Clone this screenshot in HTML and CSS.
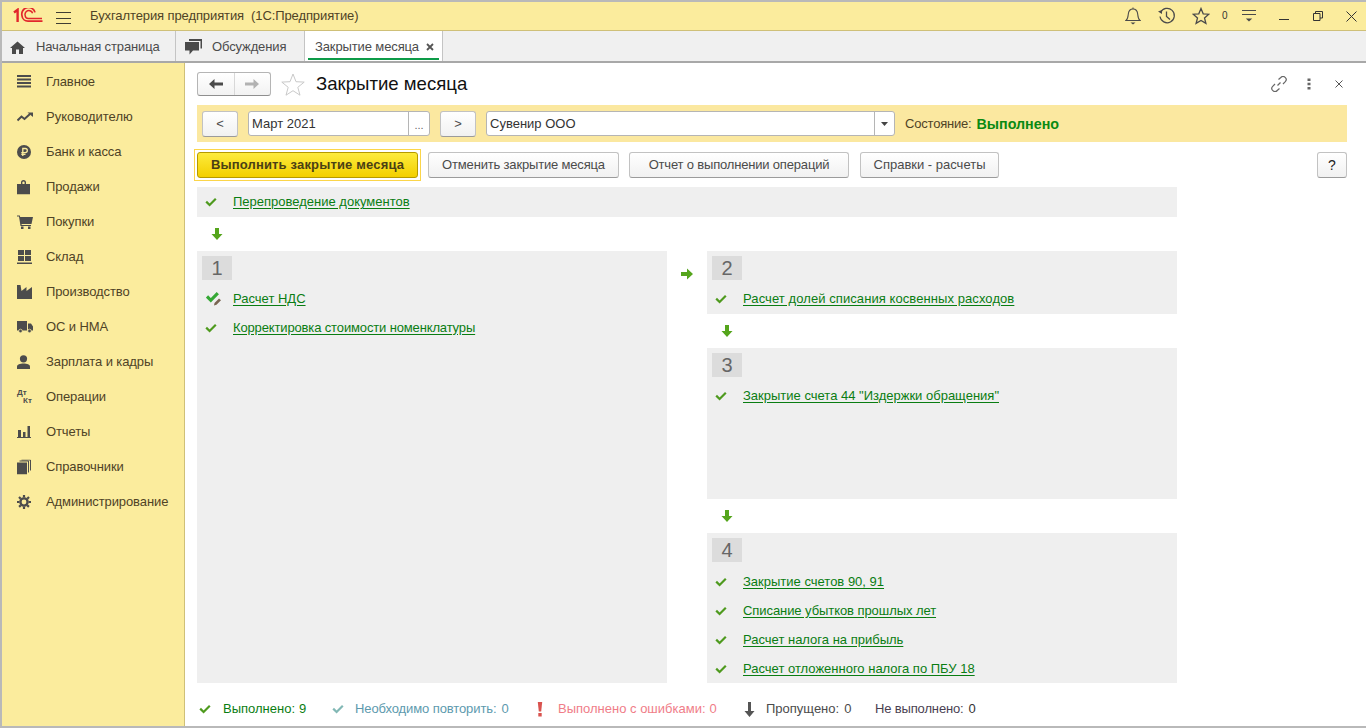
FILE: index.html
```html
<!DOCTYPE html>
<html lang="ru">
<head>
<meta charset="utf-8">
<title>Закрытие месяца</title>
<link rel="stylesheet" href="styles.css">
</head>
<body>
<svg class="defs" width="0" height="0" aria-hidden="true">
  <symbol id="chk" viewBox="0 0 12 10"><path d="M1.2 4.6 4.6 8 10.8 1.8" fill="none" stroke="currentColor" stroke-width="2.2"/></symbol>
  <symbol id="down" viewBox="0 0 12 14"><path d="M4 1h4v6h3.5L6 13 .5 7H4z" fill="#55a51c"/></symbol>
  <symbol id="right" viewBox="0 0 14 12"><path d="M1 4h6V.5L13 6l-6 5.5V8H1z" fill="#55a51c"/></symbol>
</svg>
<div class="window">
  <header class="titlebar">
    <svg class="logo" width="30" height="16" viewBox="0 0 30 16"><g fill="none" stroke="#e2262c"><path d="M1 4.5 4.6 1.800V14" stroke-width="2.400"/><path d="M22 4.400A6.200 6.200 0 0 0 9 7.800a6 6 0 0 0 6 5.400H29.500" stroke-width="1.700"/><path d="M19.600 5.200A3.200 3.200 0 0 0 12.200 7.800a3 3 0 0 0 3 2.700H29" stroke-width="1.500"/></g></svg>
    <svg class="burger" width="15" height="12" viewBox="0 0 15 12"><path d="M0 .5h15M0 6.500h15M0 11.500h15" stroke="#3f3d33" stroke-width="1"/></svg>
    <span class="apptitle">Бухгалтерия предприятия  (1С:Предприятие)</span>
    <div class="winicons">
      <svg class="wi w-bell" width="16" height="18" viewBox="0 0 16 18"><path d="M1 13.500c2-1.500 2-3.500 2.300-6.500C3.700 3.500 5.500 2 8 2s4.300 1.500 4.700 5c.3 3 .3 5 2.300 6.500z" fill="none" stroke="#4a4a4a" stroke-width="1.100"/><path d="M8 .5v1.500" stroke="#4a4a4a"/><path d="M5.500 15.500h5L8 17.500z" fill="#4a4a4a"/></svg>
      <svg class="wi w-hist" width="18" height="18" viewBox="0 0 18 18"><path d="M2.600 5.500A7.200 7.200 0 1 1 2 9.500" fill="none" stroke="#4a4a4a" stroke-width="1.200"/><path d="M0 4.500 4 3v4z" fill="#4a4a4a"/><path d="M8.500 4.500V9.500l3.500 3" fill="none" stroke="#4a4a4a" stroke-width="1.300"/></svg>
      <svg class="wi w-star" width="18" height="18" viewBox="0 0 18 18"><path d="M9 1.500 11.200 6.800 16.800 7.200 12.500 10.900 13.900 16.400 9 13.400 4.100 16.400 5.500 10.900 1.200 7.200 6.800 6.800z" fill="none" stroke="#4a4a4a" stroke-width="1.300"/></svg>
      <span class="w-zero">0</span>
      <svg class="wi w-filter" width="16" height="14" viewBox="0 0 16 14"><path d="M1 1.500h14M1 5.500h14" stroke="#4a4a4a" stroke-width="1"/><path d="M4.800 9.500h6.400L8 12.500z" fill="#4a4a4a"/></svg>
      <svg class="wi w-min" width="10" height="10" viewBox="0 0 10 10"><path d="M0 8.500h10" stroke="#333" stroke-width="1"/></svg>
      <svg class="wi w-rest" width="10" height="10" viewBox="0 0 10 10"><path d="M.5 2.500h6.500v7H.5zM2.500 2.500V.5h7v6.500H7" fill="none" stroke="#333" stroke-width="1"/></svg>
      <svg class="wi w-close" width="11" height="11" viewBox="0 0 11 11"><path d="M.5.500l10 10M10.500.500l-10 10" stroke="#333" stroke-width="1"/></svg>
    </div>
  </header>
  <nav class="tabs">
    <div class="tab tab-home">
      <svg class="tab-ic" width="15" height="13" viewBox="0 0 15 13"><path d="M7.500.500 15 7h-2v6H9V8.500H6V13H2V7H0z" fill="#4a4a4a"/></svg>
      <span>Начальная страница</span>
    </div>
    <div class="tab tab-disc">
      <svg class="tab-ic" width="17" height="16" viewBox="0 0 17 16"><path d="M4 0h13v9.500h-1.500V2H4z" fill="#4a4a4a"/><path d="M0 3h14v8.500H8L4.500 15.500V11.500H0z" fill="#4a4a4a"/></svg>
      <span>Обсуждения</span>
    </div>
    <div class="tab tab-active">
      <span>Закрытие месяца</span>
      <svg class="tab-x" width="8" height="8" viewBox="0 0 8 8"><path d="M1 1l6 6M7 1 1 7" stroke="#555" stroke-width="1.800"/></svg>
    </div>
  </nav>
  <div class="body">
    <aside class="sidebar">
      <a class="nav"><svg width="14" height="14" viewBox="0 0 14 14"><path d="M0 1h14M0 4.500h14M0 8h14M0 11.500h14" stroke="#4c4c4c" stroke-width="1.800"/></svg><span>Главное</span></a>
      <a class="nav nav-wide"><svg width="16" height="10" viewBox="0 0 16 10"><path d="M.500 8.500 4.500 4.500 7.500 7 13 2" fill="none" stroke="#4c4c4c" stroke-width="2"/><path d="M10.500.500H16V5z" fill="#4c4c4c"/></svg><span>Руководителю</span></a>
      <a class="nav"><svg width="14" height="14" viewBox="0 0 14 14"><circle cx="7" cy="7" r="7" fill="#4c4c4c"/><path d="M5.800 11V3.500h2.400a2 2 0 0 1 0 4.200H4.300M4.300 9.400H8.500" fill="none" stroke="#fbec9d" stroke-width="1.300"/></svg><span>Банк и касса</span></a>
      <a class="nav"><svg width="13" height="15" viewBox="0 0 13 15"><path d="M0 4.500h4V3a2.500 2.500 0 0 1 5 0v1.500h4V15H0z" fill="#4c4c4c"/><path d="M5.400 4.500V3a1.100 1.100 0 0 1 2.200 0v1.500" fill="#fbec9d"/></svg><span>Продажи</span></a>
      <a class="nav"><svg width="16" height="14" viewBox="0 0 16 14"><path d="M0 .500h2.800L3.200 2H16l-1.500 7H4.500L4.700 10H14v1H3.500L2 1.500H0z" fill="#4c4c4c"/><rect x="4" y="11.500" width="2.500" height="2.500" fill="#4c4c4c"/><rect x="11" y="11.500" width="2.500" height="2.500" fill="#4c4c4c"/></svg><span>Покупки</span></a>
      <a class="nav"><svg width="15" height="14" viewBox="0 0 15 14"><path d="M1 0h6v5H1zM8 0h6v5H8zM1 6h6v5H1zM8 6h6v5H8z" fill="#4c4c4c"/><path d="M0 12.500h15V14H0z" fill="#4c4c4c"/></svg><span>Склад</span></a>
      <a class="nav"><svg width="15" height="14" viewBox="0 0 15 14"><path d="M0 14V0h3.500l1 6L9.500 2v4L15 2v12z" fill="#4c4c4c"/></svg><span>Производство</span></a>
      <a class="nav"><svg width="16" height="12" viewBox="0 0 16 12"><path d="M0 0h10v9.500H0zM11 2.500h3L16 5.500v4h-5z" fill="#4c4c4c"/><circle cx="3.500" cy="10" r="1.800" fill="#4c4c4c" stroke="#fbec9d" stroke-width=".7"/><circle cx="12.500" cy="10" r="1.800" fill="#4c4c4c" stroke="#fbec9d" stroke-width=".7"/></svg><span>ОС и НМА</span></a>
      <a class="nav"><svg width="13" height="14" viewBox="0 0 13 14"><circle cx="6.500" cy="3.800" r="3.600" fill="#4c4c4c"/><path d="M0 14v-2.500C0 9.500 3 8.500 6.500 8.500S13 9.500 13 11.500V14z" fill="#4c4c4c"/></svg><span>Зарплата и кадры</span></a>
      <a class="nav"><span class="dtkt"><b>Дт</b><b class="kt">Кт</b></span><span>Операции</span></a>
      <a class="nav"><svg width="14" height="12" viewBox="0 0 14 12"><path d="M1 4h3v7H1zM6 6h2.500v5H6zM10.500 0H13v11h-2.500z" fill="#4c4c4c"/><path d="M0 11h14v1H0z" fill="#4c4c4c"/></svg><span>Отчеты</span></a>
      <a class="nav"><svg width="14" height="15" viewBox="0 0 14 15"><path d="M0 3h10v12H0z" fill="#4c4c4c"/><path d="M2.500 1.500h9V13M4.500.500h9V11" fill="none" stroke="#4c4c4c" stroke-width="1"/></svg><span>Справочники</span></a>
      <a class="nav"><svg width="14" height="14" viewBox="0 0 14 14"><circle cx="7" cy="7" r="3.600" fill="none" stroke="#4c4c4c" stroke-width="2.400"/><path d="M7 0v14M0 7h14M2 2l10 10M12 2 2 12" stroke="#4c4c4c" stroke-width="2.200" stroke-dasharray="2.400 9.200 2.400"/></svg><span>Администрирование</span></a>
    </aside>
    <main class="content">
      <div class="formhead">
        <div class="navbtns">
          <span class="navbtn"><svg width="14" height="10" viewBox="0 0 14 10"><path d="M0 5 5.500 0v3.500H14v3H5.500V10z" fill="#4a4a4a"/></svg></span>
          <span class="navbtn"><svg width="14" height="10" viewBox="0 0 14 10"><path d="M14 5 8.500 0v3.500H0v3h8.500V10z" fill="#b2b2b2"/></svg></span>
        </div>
        <svg class="bigstar" width="24" height="23" viewBox="0 0 24 23"><path d="M12 1 15 8.700 23.200 9.100 16.800 14.300 19 22.200 12 17.700 5 22.200 7.200 14.300.8 9.100 9 8.700z" fill="none" stroke="#c9c9c9" stroke-width="1"/></svg>
        <h1 class="title">Закрытие месяца</h1>
        <div class="formicons">
          <svg width="16" height="16" viewBox="0 0 16 16"><g fill="none" stroke="#666" stroke-width="1.200"><path d="M6.500 9.500 9.500 6.500"/><path d="M7.500 3.500 9.800 1.500a3 3 0 0 1 4.500 4.200L12 8"/><path d="M8.500 12.500 6.200 14.500a3 3 0 0 1-4.500-4.200L4 8"/></g></svg>
          <svg width="4" height="12" viewBox="0 0 4 12"><path d="M.5.500h3v2.500h-3zM.5 4.800h3v2.500h-3zM.5 9h3v2.500h-3z" fill="#666"/></svg>
          <svg width="8" height="8" viewBox="0 0 8 8"><path d="M.5.500l7 7M7.500.500l-7 7" stroke="#555" stroke-width="1"/></svg>
        </div>
      </div>
      <section class="filterbar">
        <button class="btn btn-step">&lt;</button>
        <div class="field field-period"><span class="field-val">Март 2021</span><span class="field-act">...</span></div>
        <button class="btn btn-step">&gt;</button>
        <div class="field field-org"><span class="field-val">Сувенир ООО</span><span class="field-drop"><svg width="7" height="4" viewBox="0 0 7 4"><path d="M0 0h7L3.500 4z" fill="#444"/></svg></span></div>
        <span class="state-label">Состояние:</span>
        <span class="state-val">Выполнено</span>
      </section>
      <section class="actions">
        <span class="focusring"><button class="btn btn-primary">Выполнить закрытие месяца</button></span>
        <button class="btn btn-a1">Отменить закрытие месяца</button>
        <button class="btn btn-a2">Отчет о выполнении операций</button>
        <button class="btn btn-a3">Справки - расчеты</button>
        <button class="btn btn-help">?</button>
      </section>
      <section class="process">
        <div class="row row-top"><svg class="chk"><use href="#chk"/></svg><a class="lnk">Перепроведение документов</a></div>
        <div class="arrow-d arrow-top"><svg width="12" height="14"><use href="#down"/></svg></div>
        <div class="stages">
          <div class="panel">
            <div class="badge">1</div>
            <div class="row"><svg class="chk-edit" width="16" height="15" viewBox="0 0 16 15"><path d="M1 5.500 4.800 9.300 11.800 2.200" fill="none" stroke="#35a835" stroke-width="3.200"/><path d="M8.500 12 13 7.500l2 1.800-4.500 4.500-2.500.7z" fill="#7a6552"/></svg><a class="lnk">Расчет НДС</a></div>
            <div class="row"><svg class="chk"><use href="#chk"/></svg><a class="lnk lnk-tight">Корректировка стоимости номенклатуры</a></div>
          </div>
          <div class="arrow-r"><svg width="14" height="12"><use href="#right"/></svg></div>
          <div class="rightcol">
            <div class="panel p2">
              <div class="badge">2</div>
              <div class="row"><svg class="chk"><use href="#chk"/></svg><a class="lnk lnk-wide">Расчет долей списания косвенных расходов</a></div>
            </div>
            <div class="arrow-d"><svg width="12" height="14"><use href="#down"/></svg></div>
            <div class="panel p3">
              <div class="badge">3</div>
              <div class="row"><svg class="chk"><use href="#chk"/></svg><a class="lnk">Закрытие счета 44 "Издержки обращения"</a></div>
            </div>
            <div class="arrow-d"><svg width="12" height="14"><use href="#down"/></svg></div>
            <div class="panel p4">
              <div class="badge">4</div>
              <div class="row"><svg class="chk"><use href="#chk"/></svg><a class="lnk">Закрытие счетов 90, 91</a></div>
              <div class="row"><svg class="chk"><use href="#chk"/></svg><a class="lnk lnk-slight">Списание убытков прошлых лет</a></div>
              <div class="row"><svg class="chk"><use href="#chk"/></svg><a class="lnk">Расчет налога на прибыль</a></div>
              <div class="row"><svg class="chk"><use href="#chk"/></svg><a class="lnk">Расчет отложенного налога по ПБУ 18</a></div>
            </div>
          </div>
        </div>
      </section>
      <footer class="legend">
        <span class="lg lg-done"><svg class="chk"><use href="#chk"/></svg><span>Выполнено:</span><span class="n">9</span></span>
        <span class="lg lg-rep"><svg class="chk"><use href="#chk"/></svg><span>Необходимо повторить:</span><span class="n">0</span></span>
        <span class="lg lg-err"><svg width="6" height="15" viewBox="0 0 6 15"><path d="M.800 0h4.400L4.200 9.500H1.800z" fill="#d9534f"/><rect x="1.300" y="11" width="3.400" height="3.500" fill="#d9534f"/></svg><span>Выполнено с ошибками:</span><span class="n">0</span></span>
        <span class="lg lg-skip"><svg width="11" height="15" viewBox="0 0 11 15"><path d="M4 0h3v9h3.500L5.500 15 .5 9H4z" fill="#555"/></svg><span>Пропущено:</span><span class="n">0</span></span>
        <span class="lg lg-not"><span>Не выполнено:</span><span class="n">0</span></span>
      </footer>
    </main>
  </div>
</div>
</body>
</html>
```
FILE: styles.css
```css
* { box-sizing: border-box; }
html, body { margin: 0; height: 100%; }
body { font: 13px/16px "Liberation Sans", Arial, sans-serif; color: #4b4b4b; background: #fff; overflow: hidden; }
.defs { position: absolute; }
svg { display: block; flex: none; }

.window { width: 1366px; height: 728px; border: 2px solid #b9b9b9; border-right-width: 0; display: flex; flex-direction: column; }

.titlebar { height: 29px; background: #fbec9d; border-bottom: 1px solid #cfc078; display: flex; align-items: center; padding-left: 11px; flex: none; }
.logo { margin-right: 13px; }
.burger { margin: 3px 19px 0 0; }
.apptitle { white-space: pre; color: #4f4326; letter-spacing: -.1px; }
.winicons { margin-left: auto; display: flex; align-items: center; height: 100%; padding-right: 9px; }
.w-bell { margin-right: 17px; }
.w-hist { margin-right: 16px; }
.w-star { margin-right: 12px; }
.w-zero { font-size: 10px; width: 8px; color: #333; margin-right: 11px; }
.w-filter { margin-right: 22px; }
.w-min { margin-right: 24px; }
.w-rest { margin-right: 23px; }

.tabs { height: 32px; background: #f0f0f0; border-bottom: 2px solid #a8a8a8; display: flex; flex: none; }
.tab { display: flex; align-items: center; height: 30px; padding-top: 2px; border-right: 1px solid #c4c4c4; color: #4b4b4b; letter-spacing: -.12px; }
.tab-home { width: 174px; padding-left: 8px; }
.tab-home .tab-ic { margin-right: 11px; }
.tab-disc { width: 129px; padding-left: 9px; }
.tab-disc .tab-ic { margin-right: 10px; }
.tab-active { width: 138px; padding-left: 10px; background: #fff; position: relative; }
.tab-active::after { content: ""; position: absolute; left: 3px; right: 3px; bottom: 1px; height: 2px; background: #0d9b48; }
.tab-x { margin-left: 7px; }

.body { flex: 1; display: flex; min-height: 0; }
.sidebar { width: 183px; background: #fbec9d; border-right: 1px solid #cfc078; padding-top: 1px; flex: none; }
.nav { display: flex; align-items: center; height: 35px; color: #4f4326; position: relative; padding-left: 44px; letter-spacing: -.1px; }
.nav-wide { letter-spacing: 0; }
.nav svg, .dtkt { position: absolute; left: 15px; top: 50%; transform: translateY(-50%); }
.dtkt { display: flex; flex-direction: column; font-size: 8px; line-height: 8px; color: #4c4c4c; width: 16px; letter-spacing: 0; }
.dtkt b { display: block; }
.dtkt .kt { margin-left: 6px; }

.content { flex: 1; padding: 0 19px 0 12px; display: flex; flex-direction: column; min-width: 0; }
.formhead { height: 42px; display: flex; align-items: center; flex: none; }
.navbtns { display: flex; width: 74px; height: 24px; border: 1px solid #b5b5b5; border-bottom-color: #8f8f8f; border-radius: 3px; background: linear-gradient(#fff, #f2f2f2); }
.navbtn { flex: 1; display: flex; align-items: center; justify-content: center; }
.navbtn + .navbtn { border-left: 1px solid #d8d8d8; }
.bigstar { margin-left: 10px; }
.title { margin: 0 0 0 11px; font-size: 18.6px; font-weight: 400; color: #111; line-height: 24px; }
.formicons { margin-left: auto; display: flex; align-items: center; margin-right: 4px; }
.formicons svg:nth-child(1) { margin-right: 20px; }
.formicons svg:nth-child(2) { margin-right: 24px; }

.filterbar { height: 37px; background: #fbe8a0; display: flex; align-items: center; padding-left: 5px; flex: none; }
.btn { font: 13px/16px "Liberation Sans", Arial, sans-serif; color: #4b4b4b; height: 26px; padding: 0; border: 1px solid #c2c2c2; border-bottom-color: #9b9b9b; border-radius: 3px; background: linear-gradient(#fff, #f1f1f1); flex: none; }
.btn-step { width: 36px; }
.field { height: 25px; border: 1px solid #b5b5b5; border-radius: 3px; background: #fff; display: flex; align-items: center; flex: none; color: #333; }
.field-val { flex: 1; padding-left: 3px; }
.field-period { width: 182px; margin: 0 10px; }
.field-act { width: 21px; height: 100%; border-left: 1px solid #b5b5b5; text-align: center; color: #666; font-size: 11px; line-height: 26px; }
.field-org { width: 409px; margin: 0 10px; }
.field-drop { width: 20px; height: 100%; border-left: 1px solid #b5b5b5; display: flex; align-items: center; justify-content: center; }
.state-label { color: #4f4326; margin-right: 5px; letter-spacing: -.2px; }
.state-val { font-weight: 700; color: #0a8a12; font-size: 14.3px; }

.actions { display: flex; align-items: center; height: 27px; margin-top: 9px; flex: none; }
.focusring { display: block; padding: 2px; margin: -2px 7px -2px -3px; border: 1px solid #fbd54a; }
.focusring .btn { display: block; }
.btn-primary { width: 221px; font-weight: 700; border-color: #b59a00; color: #4a4014; background: linear-gradient(#fdeb3c, #f3cf00); letter-spacing: .16px; }
.btn-a1 { width: 191px; margin-right: 10px; letter-spacing: -.17px; }
.btn-a2 { width: 220px; margin-right: 11px; letter-spacing: -.18px; }
.btn-a3 { width: 139px; }
.btn-help { width: 30px; margin-left: auto; color: #222; font-size: 14px; }

.process { width: 980px; margin-top: 9px; flex: none; }
.row { display: flex; align-items: center; height: 29px; padding-left: 8px; }
.row .chk { margin-right: 16px; }
.chk { width: 12px; height: 10px; color: #4e9a1e; flex: none; }
.chk-edit { margin: 0 11px 0 1px; }
.lnk { color: #0a7d12; text-decoration: underline; text-underline-offset: 2px; }
.lnk-tight { letter-spacing: -.14px; }
.lnk-wide { letter-spacing: .08px; }
.lnk-slight { letter-spacing: -.07px; }
.row-top { height: 30px; background: #efefef; }
.arrow-d { height: 34px; display: flex; align-items: center; padding-left: 14px; }
.stages { display: flex; height: 432px; }
.panel { background: #efefef; padding-top: 5px; }
.stages > .panel { width: 470px; }
.arrow-r { width: 40px; padding: 17px 0 0 13px; }
.rightcol { width: 470px; display: flex; flex-direction: column; }
.p2 { height: 63px; }
.p3 { height: 151px; }
.p4 { flex: 1; }
.badge { width: 30px; height: 24px; margin: 0 0 4px 5px; background: #dcdcdc; color: #666; font-size: 20px; line-height: 24px; text-align: center; }
.p4 .badge { margin-bottom: 5px; }

.legend { display: flex; align-items: center; height: 43px; padding: 9px 0 0 2px; flex: none; }
.lg { display: flex; align-items: center; flex: none; }
.lg .n { margin-left: 5px; }
.lg-done .n, .lg-err .n { margin-left: 4px; }
.lg-done { color: #0a7d12; width: 133px; }
.lg-done svg { margin-right: 12px; }
.lg-rep { color: #5d9aae; width: 205px; }
.lg-rep span:first-of-type { letter-spacing: -.1px; }
.lg-rep .chk { color: #82b8b5; margin-right: 11px; }
.lg-err { color: #f07d88; width: 207px; }
.lg-err svg { margin-right: 15px; }
.lg-skip { color: #4b4b4b; width: 131px; }
.lg-skip svg { margin-right: 11px; }
.lg-not { color: #4a3f52; }
.lg-not span:first-child { letter-spacing: -.15px; }
.lg-not .n { color: #333; }
```
